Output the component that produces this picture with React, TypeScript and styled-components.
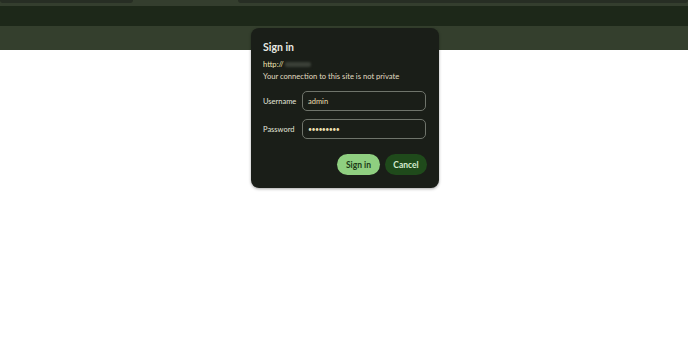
import React from "react";
import styled, { createGlobalStyle } from "styled-components";

const Global = createGlobalStyle`
  html, body { margin: 0; padding: 0; background: #ffffff; }
  body { font-family: Lato, "Noto Sans", sans-serif; }
  * { box-sizing: border-box; }
`;

const Page = styled.div`
  position: relative;
  width: 688px;
  height: 346px;
  background: #ffffff;
  overflow: hidden;
`;

const TabStrip = styled.div`
  height: 6px;
  background: #343e2e;
  display: flex;
  align-items: flex-start;
`;

const Tab = styled.div<{ $w: number; $grow?: boolean }>`
  height: 3px;
  width: ${(p) => p.$w}px;
  flex: ${(p) => (p.$grow ? 1 : "none")};
  background: #272e24;
  border-radius: 0 0 6px 6px;
`;

const Gap = styled.div<{ $w: number }>`
  width: ${(p) => p.$w}px;
  flex: none;
`;

const Toolbar = styled.div`
  height: 20px;
  background: #1d2819;
`;

const InfoBar = styled.div`
  height: 24px;
  background: #343f2d;
`;

const Dialog = styled.div`
  position: absolute;
  left: 251px;
  top: 28px;
  width: 188px;
  height: 160px;
  background: #1a1e18;
  border-radius: 8px;
  box-shadow: 0 1px 3px rgba(0, 0, 0, 0.35);
  padding: 13px 12px 0 12px;
  color: #e3e6dc;
  display: flex;
  flex-direction: column;
`;

const Title = styled.div`
  font-size: 10.5px;
  font-weight: 700;
  line-height: 12px;
  color: #e8ebe3;
  margin-bottom: 5px;
`;

const Url = styled.div`
  font-size: 7.6px;
  line-height: 12px;
  color: #efe3b0;
  display: flex;
  align-items: center;
`;

const Blur = styled.span`
  display: inline-block;
  width: 26px;
  height: 5px;
  margin-left: 1px;
  background: #3a3f37;
  filter: blur(1.2px);
  border-radius: 2px;
`;

const Note = styled.div`
  font-size: 7.6px;
  line-height: 12px;
  color: #e0dbc0;
  margin-bottom: 9px;
`;

const Row = styled.div`
  display: flex;
  align-items: center;
  height: 20px;
  margin-bottom: 8px;
`;

const Label = styled.div`
  width: 39px;
  font-size: 7.5px;
  color: #e3e6dc;
`;

const Input = styled.div`
  width: 124px;
  height: 20px;
  border: 1px solid #6f746b;
  border-radius: 5px;
  padding-left: 5px;
  display: flex;
  align-items: center;
  font-size: 7.5px;
  color: #eadfae;
`;

const Dots = styled.span`
  letter-spacing: -0.6px;
  font-size: 7px;
`;

const Actions = styled.div`
  display: flex;
  justify-content: flex-end;
  gap: 5px;
  margin-top: 7px;
`;

const Button = styled.div<{ $primary?: boolean }>`
  height: 21px;
  width: ${(p) => (p.$primary ? 43 : 42)}px;
  border-radius: 11px;
  display: flex;
  align-items: center;
  justify-content: center;
  font-size: 8.5px;
  font-weight: 700;
  background: ${(p) => (p.$primary ? "#8fcf80" : "#1f4a1b")};
  color: ${(p) => (p.$primary ? "#1b3a17" : "#d6ecd0")};
`;

export default function App() {
  return (
    <Page>
      <Global />
      <TabStrip>
        <Tab $w={133} />
        <Gap $w={105} />
        <Tab $w={0} $grow />
      </TabStrip>
      <Toolbar />
      <InfoBar />
      <Dialog>
        <Title>Sign in</Title>
        <Url>
          http://<Blur />
        </Url>
        <Note>Your connection to this site is not private</Note>
        <Row>
          <Label>Username</Label>
          <Input>admin</Input>
        </Row>
        <Row>
          <Label>Password</Label>
          <Input>
            <Dots>•••••••••</Dots>
          </Input>
        </Row>
        <Actions>
          <Button $primary>Sign in</Button>
          <Button>Cancel</Button>
        </Actions>
      </Dialog>
    </Page>
  );
}
